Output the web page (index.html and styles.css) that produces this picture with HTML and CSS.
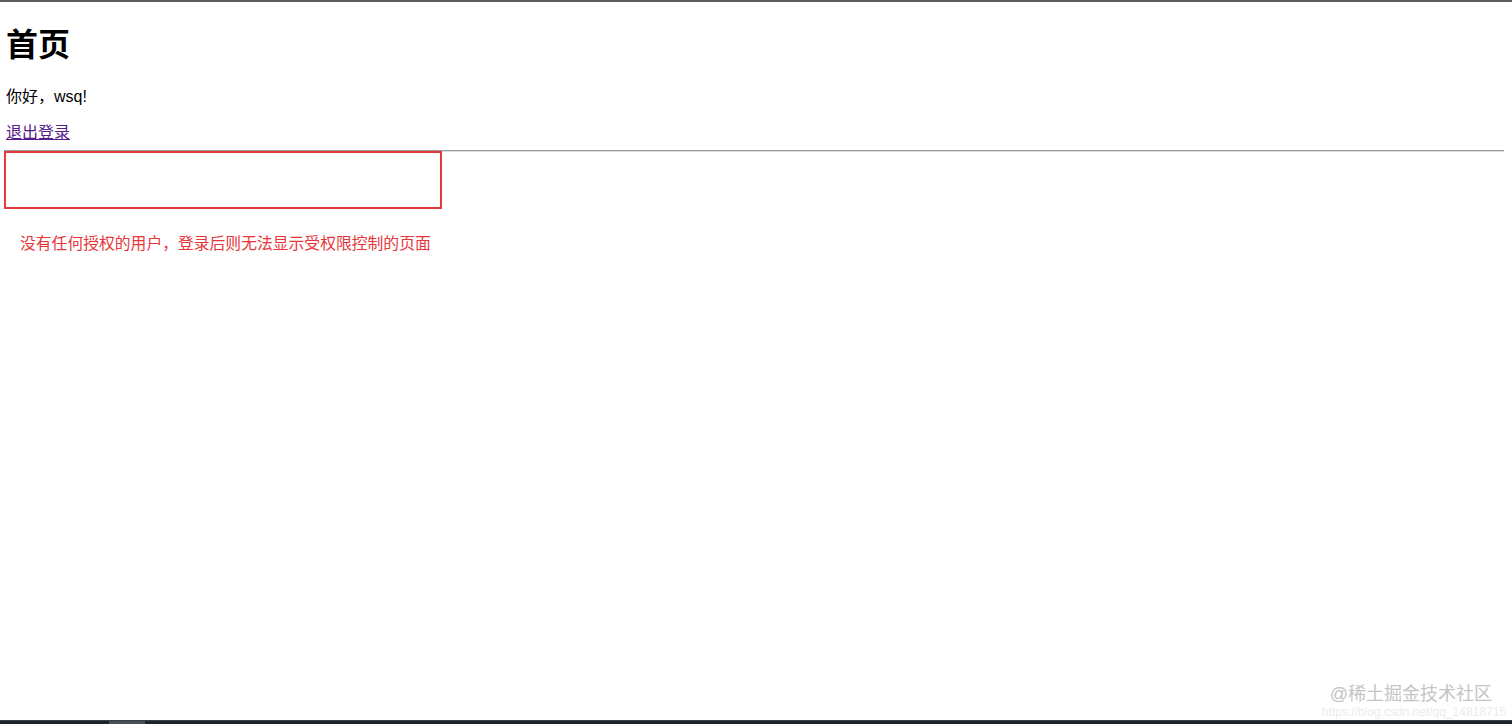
FILE: index.html
```html
<!DOCTYPE html>
<html lang="zh-CN">
<head>
<meta charset="utf-8">
<title>首页</title>
<link rel="stylesheet" href="styles.css">
</head>
<body>
<div class="page">
  <div class="topbar"></div>
  <main class="content">
    <h1 class="title">首页</h1>
    <p class="greet">你好，wsq!</p>
    <p class="logout"><a class="link" href="#">退出登录</a></p>
    <hr class="rule">
    <div class="redbox"></div>
    <p class="notice">没有任何授权的用户，登录后则无法显示受权限控制的页面</p>
  </main>
  <footer class="bottombar"><span class="tab"></span></footer>
  <div class="watermark">
    <div class="wm-main">@稀土掘金技术社区</div>
    <div class="wm-url">https://blog.csdn.net/qq_14818715</div>
  </div>
</div>
</body>
</html>
```
FILE: styles.css
```css
html, body {
  margin: 0;
  padding: 0;
  background: #ffffff;
}
body {
  font-family: "Liberation Sans", "Noto Sans CJK SC", sans-serif;
  color: #000;
}
.page {
  position: relative;
  height: 724px;
  display: flex;
  flex-direction: column;
  overflow: hidden;
}
.topbar {
  height: 2px;
  background: #5c5c5c;
  flex: none;
}
.content {
  flex: 1;
  padding: 0 8px 0 4px;
}
.title {
  margin: 25px 0 0 2px;
  font-size: 32px;
  line-height: 36px;
  font-weight: 700;
}
.greet {
  margin: 24px 0 0 2px;
  font-size: 16px;
  line-height: 20px;
}
.logout {
  margin: 16px 0 0 2px;
  font-size: 16px;
  line-height: 20px;
}
.link {
  color: #551a8b;
  text-decoration: underline;
}
.rule {
  margin: 7px 0 0 0;
  height: 0;
  border: none;
  border-top: 1px solid #9a9a9a;
  border-bottom: 1px solid #dcdcdc;
}
.redbox {
  width: 434px;
  height: 54px;
  margin-top: -1px;
  border: 2px solid #e53a3e;
}
.notice {
  margin: 25px 0 0 16px;
  font-size: 15.8px;
  line-height: 20px;
  color: #e8353a;
}
.bottombar {
  flex: none;
  height: 3px;
  background: #1f242b;
  border-top: 1px solid #3a3f46;
  position: relative;
}
.tab {
  display: block;
  width: 36px;
  height: 3px;
  margin-left: 109px;
  background: #4a4f57;
}
.watermark {
  position: absolute;
  right: 6px;
  bottom: 5px;
  text-align: right;
  pointer-events: none;
}
.wm-main {
  font-size: 18px;
  line-height: 22px;
  color: #c4c4c4;
  margin-right: 14px;
}
.wm-url {
  font-size: 12px;
  line-height: 14px;
  color: #ececec;
}
```
